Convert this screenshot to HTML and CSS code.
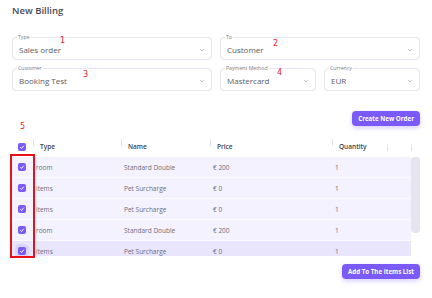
FILE: index.html
```html
<!DOCTYPE html>
<html lang="en">
<head>
    <meta charset="UTF-8">
    <meta name="viewport" content="width=device-width, initial-scale=1.0">
    <title>New Billing</title>
    <link rel="stylesheet" href="styles.css">
</head>
<body>
    <div class="page">
        <h1 class="title">New Billing</h1>

        <div class="form">
            <div class="field">
                <span class="label">Type</span>
                <span class="value">Sales order</span>
                <svg class="chevron" viewBox="0 0 10 6"><path d="M2 1.5l3 3 3-3"/></svg>
            </div>
            <div class="field">
                <span class="label">To</span>
                <span class="value">Customer</span>
                <svg class="chevron" viewBox="0 0 10 6"><path d="M2 1.5l3 3 3-3"/></svg>
            </div>
            <div class="field">
                <span class="label">Customer</span>
                <span class="value">Booking Test</span>
                <svg class="chevron" viewBox="0 0 10 6"><path d="M2 1.5l3 3 3-3"/></svg>
            </div>
            <div class="pair">
                <div class="field">
                    <span class="label">Payment Method</span>
                    <span class="value">Mastercard</span>
                    <svg class="chevron" viewBox="0 0 10 6"><path d="M2 1.5l3 3 3-3"/></svg>
                </div>
                <div class="field">
                    <span class="label">Currency</span>
                    <span class="value">EUR</span>
                    <svg class="chevron" viewBox="0 0 10 6"><path d="M2 1.5l3 3 3-3"/></svg>
                </div>
            </div>
        </div>

        <div class="actions">
            <button class="btn">Create New Order</button>
        </div>

        <div class="table">
            <div class="thead">
                <div class="th"><span class="cb"><svg viewBox="0 0 8 8"><path d="M2.2 4.3l1.2 1.2 2.4-2.8"/></svg></span></div>
                <div class="th">Type</div>
                <div class="th">Name</div>
                <div class="th">Price</div>
                <div class="th">Quantity</div>
                <div class="th"></div>
                <div class="th"></div>
            </div>
            <div class="tbody">
                <div class="rows">
                    <div class="row">
                        <div class="td"><span class="cb"><svg viewBox="0 0 8 8"><path d="M2.2 4.3l1.2 1.2 2.4-2.8"/></svg></span></div>
                        <div class="td">room</div>
                        <div class="td">Standard Double</div>
                        <div class="td">€ 200</div>
                        <div class="td">1</div>
                        <div class="td"></div>
                    </div>
                    <div class="row">
                        <div class="td"><span class="cb"><svg viewBox="0 0 8 8"><path d="M2.2 4.3l1.2 1.2 2.4-2.8"/></svg></span></div>
                        <div class="td">items</div>
                        <div class="td">Pet Surcharge</div>
                        <div class="td">€ 0</div>
                        <div class="td">1</div>
                        <div class="td"></div>
                    </div>
                    <div class="row">
                        <div class="td"><span class="cb"><svg viewBox="0 0 8 8"><path d="M2.2 4.3l1.2 1.2 2.4-2.8"/></svg></span></div>
                        <div class="td">items</div>
                        <div class="td">Pet Surcharge</div>
                        <div class="td">€ 0</div>
                        <div class="td">1</div>
                        <div class="td"></div>
                    </div>
                    <div class="row">
                        <div class="td"><span class="cb"><svg viewBox="0 0 8 8"><path d="M2.2 4.3l1.2 1.2 2.4-2.8"/></svg></span></div>
                        <div class="td">room</div>
                        <div class="td">Standard Double</div>
                        <div class="td">€ 200</div>
                        <div class="td">1</div>
                        <div class="td"></div>
                    </div>
                    <div class="row active">
                        <div class="td"><span class="cb focus"><svg viewBox="0 0 8 8"><path d="M2.2 4.3l1.2 1.2 2.4-2.8"/></svg></span></div>
                        <div class="td">items</div>
                        <div class="td">Pet Surcharge</div>
                        <div class="td">€ 0</div>
                        <div class="td">1</div>
                        <div class="td"></div>
                    </div>
                </div>
                <div class="scrollbar"><div class="thumb"></div></div>
            </div>
        </div>

        <div class="actions bottom">
            <button class="btn">Add To The Items List</button>
        </div>

        <!-- annotations drawn over the screenshot -->
        <span class="mark m1">1</span>
        <span class="mark m2">2</span>
        <span class="mark m3">3</span>
        <span class="mark m4">4</span>
        <span class="mark m5">5</span>
        <div class="highlight"></div>
    </div>
</body>
</html>
```

FILE: styles.css
```css
body {
    margin: 0;
    background-color: #fff;
    font-family: "Open Sans", "Noto Sans", sans-serif;
    color: #5f5f6b;
}

.page {
    position: relative;
    width: 432px;
    height: 298px;
    padding: 5px 12px 0;
    box-sizing: border-box;
}

.title {
    margin: 0 0 20px;
    font-size: 9.5px;
    line-height: 12px;
    font-weight: 600;
    color: #4a4a56;
}

.form {
    display: grid;
    grid-template-columns: 1fr 1fr;
    gap: 8px;
}

.pair {
    display: grid;
    grid-template-columns: 1fr 1fr;
    gap: 8px;
}

.field {
    position: relative;
    height: 23px;
    border: 1px solid #e6e6ee;
    border-radius: 4px;
    box-sizing: border-box;
    display: flex;
    align-items: center;
    padding: 2px 6px 0;
}

.label {
    position: absolute;
    top: -4px;
    left: 4px;
    padding: 0 1px;
    background-color: #fff;
    font-size: 5.2px;
    line-height: 7px;
    color: #7a7a86;
}

.value {
    flex: 1;
    font-size: 8px;
    color: #5a5a66;
}

.chevron {
    width: 6px;
    height: 4px;
    fill: none;
    stroke: #8a8a96;
    stroke-width: 1;
}

.actions {
    display: flex;
    justify-content: flex-end;
    margin-top: 20px;
}

.actions.bottom {
    margin-top: 8px;
}

.btn {
    height: 15px;
    padding: 0 6px;
    border: none;
    border-radius: 4px;
    background-color: #7a5af8;
    color: #fff;
    font-family: inherit;
    font-size: 6.2px;
    font-weight: 700;
    box-shadow: 0 2px 5px rgba(122, 90, 248, 0.3);
}

.table {
    margin-top: 10px;
}

.thead {
    display: grid;
    grid-template-columns: 21px 88px 89px 122px 55px 24px 9px;
    height: 21px;
    align-items: center;
}

.th {
    position: relative;
    padding-left: 7px;
    font-size: 6.5px;
    font-weight: 600;
    color: #3e3e4a;
}

.th:first-child {
    padding-left: 6px;
    display: flex;
}

.th + .th::before {
    content: "";
    position: absolute;
    left: 0;
    top: -3px;
    width: 1px;
    height: 7px;
    background-color: #e2e2ea;
}

.tbody {
    display: flex;
    height: 99px;
}

.rows {
    flex: 1;
    overflow: hidden;
}

.scrollbar {
    width: 9px;
}

.thumb {
    height: 76px;
    border-radius: 4px;
    background-color: #e4e5ef;
}

.row {
    display: grid;
    grid-template-columns: 21px 88px 89px 122px 55px 24px;
    height: 21px;
    align-items: center;
    background-color: #f4f2fe;
    border-bottom: 1px solid #fbfaff;
    box-sizing: border-box;
}

.row.active {
    background-color: #e9e5fd;
}

.td {
    padding-left: 3px;
    font-size: 6.5px;
    color: #6e6e7a;
}

.td:first-child {
    padding-left: 6px;
    display: flex;
}

.cb {
    width: 8px;
    height: 8px;
    border-radius: 2px;
    background-color: #7a5af8;
    display: flex;
}

.cb.focus {
    box-shadow: 0 0 0 3px rgba(122, 90, 248, 0.12);
}

.cb svg {
    width: 8px;
    height: 8px;
    fill: none;
    stroke: #fff;
    stroke-width: 1;
}

.mark {
    position: absolute;
    font-family: "DejaVu Sans", sans-serif;
    font-size: 8px;
    line-height: 8px;
    color: #e8252b;
}

.m1 { left: 60px; top: 37px; }
.m2 { left: 273px; top: 40px; }
.m3 { left: 83px; top: 71px; }
.m4 { left: 277px; top: 69px; }
.m5 { left: 20px; top: 123px; }

.highlight {
    position: absolute;
    left: 10px;
    top: 154px;
    width: 25px;
    height: 104px;
    border: 2px solid #e8101a;
    box-sizing: border-box;
}
```
